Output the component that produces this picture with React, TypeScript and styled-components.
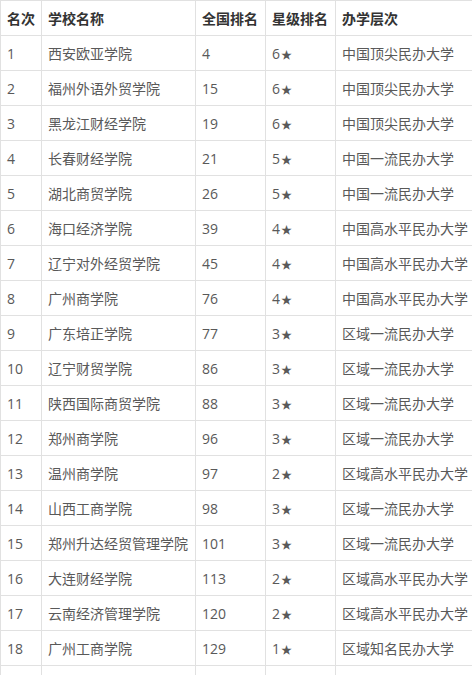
import React from 'react';
import styled, { createGlobalStyle } from 'styled-components';

const GlobalStyles = createGlobalStyle`
  html, body {
    margin: 0;
    padding: 0;
    background: #fff;
    overflow: hidden;
  }
  body {
    font-family: "Open Sans", "Noto Sans CJK SC", sans-serif;
  }
`;

const Table = styled.table`
  border-collapse: collapse;
  table-layout: fixed;
  width: 478px;
  font-size: 14px;
  color: #595959;
`;

const Col = styled.col<{ $w: number }>`
  width: ${(p) => p.$w}px;
`;

const HeadCell = styled.th`
  height: 34px;
  padding: 0 6px;
  border: 1px solid #e1e1e1;
  text-align: left;
  font-weight: 700;
  color: #333;
  white-space: nowrap;
  overflow: hidden;
`;

const Cell = styled.td`
  height: 34px;
  padding: 0 6px;
  border: 1px solid #e1e1e1;
  white-space: nowrap;
  overflow: hidden;
`;

const Star = styled.span`
  font-family: "Noto Sans CJK SC", sans-serif;
  font-size: 11px;
  margin-left: 1px;
`;

type School = [string, string, number, number, string];

const schools: School[] = [
  ['1', '西安欧亚学院', 4, 6, '中国顶尖民办大学'],
  ['2', '福州外语外贸学院', 15, 6, '中国顶尖民办大学'],
  ['3', '黑龙江财经学院', 19, 6, '中国顶尖民办大学'],
  ['4', '长春财经学院', 21, 5, '中国一流民办大学'],
  ['5', '湖北商贸学院', 26, 5, '中国一流民办大学'],
  ['6', '海口经济学院', 39, 4, '中国高水平民办大学'],
  ['7', '辽宁对外经贸学院', 45, 4, '中国高水平民办大学'],
  ['8', '广州商学院', 76, 4, '中国高水平民办大学'],
  ['9', '广东培正学院', 77, 3, '区域一流民办大学'],
  ['10', '辽宁财贸学院', 86, 3, '区域一流民办大学'],
  ['11', '陕西国际商贸学院', 88, 3, '区域一流民办大学'],
  ['12', '郑州商学院', 96, 3, '区域一流民办大学'],
  ['13', '温州商学院', 97, 2, '区域高水平民办大学'],
  ['14', '山西工商学院', 98, 3, '区域一流民办大学'],
  ['15', '郑州升达经贸管理学院', 101, 3, '区域一流民办大学'],
  ['16', '大连财经学院', 113, 2, '区域高水平民办大学'],
  ['17', '云南经济管理学院', 120, 2, '区域高水平民办大学'],
  ['18', '广州工商学院', 129, 1, '区域知名民办大学'],
];

function App() {
  return (
    <>
      <GlobalStyles />
      <Table>
        <colgroup>
          <Col $w={41} />
          <Col $w={154} />
          <Col $w={70} />
          <Col $w={70} />
          <Col $w={143} />
        </colgroup>
        <thead>
          <tr>
            <HeadCell>名次</HeadCell>
            <HeadCell>学校名称</HeadCell>
            <HeadCell>全国排名</HeadCell>
            <HeadCell>星级排名</HeadCell>
            <HeadCell>办学层次</HeadCell>
          </tr>
        </thead>
        <tbody>
          {schools.map(([rank, name, national, stars, level]) => (
            <tr key={rank}>
              <Cell>{rank}</Cell>
              <Cell>{name}</Cell>
              <Cell>{national}</Cell>
              <Cell>
                {stars}
                <Star>★</Star>
              </Cell>
              <Cell>{level}</Cell>
            </tr>
          ))}
          <tr>
            <Cell />
            <Cell />
            <Cell />
            <Cell />
            <Cell />
          </tr>
        </tbody>
      </Table>
    </>
  );
}

export default App;
